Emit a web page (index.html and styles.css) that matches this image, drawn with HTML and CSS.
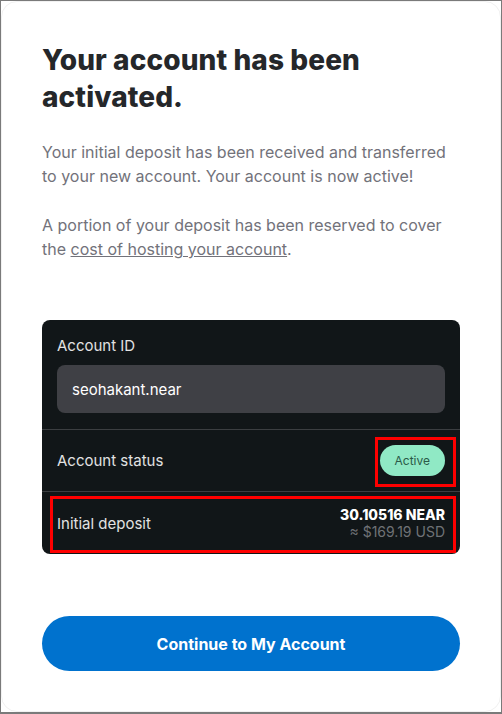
FILE: index.html
```html
<!DOCTYPE html>
<html>
  <head>
    <meta charset="utf-8">
    <title>Account activated</title>
    <link rel="stylesheet" href="styles.css">
  </head>
  <body>
    <div class="frame">
      <h1 class="title">Your account has been activated.</h1>
      <p class="text">Your initial deposit has been received and transferred to your new account. Your account is now active!</p>
      <p class="text">A portion of your deposit has been reserved to cover the <a href="#">cost of hosting your account</a>.</p>

      <div class="card">
        <div class="section">
          <div class="label">Account ID</div>
          <div class="field">seohakant.near</div>
        </div>
        <div class="row">
          <span class="label">Account status</span>
          <span class="badge">Active</span>
          <span class="mark mark-badge"></span>
        </div>
        <div class="row row-deposit">
          <span class="label">Initial deposit</span>
          <div class="amount">
            <div class="near">30.10516 NEAR</div>
            <div class="usd">≈ $169.19 USD</div>
          </div>
          <span class="mark mark-row"></span>
        </div>
      </div>

      <button class="btn">Continue to My Account</button>
    </div>
  </body>
</html>
```

FILE: styles.css
```css
*{
  margin: 0;
  padding: 0;
  box-sizing: border-box;
}
body{
  background: #fff;
  font-family: Inter, "Noto Sans", sans-serif;
  border: 1px solid #7a7a7a;
  border-bottom-width: 2px;
  height: 714px;
  overflow: hidden;
}
.frame{
  height: 100%;
  border-radius: 16px;
  border: 1px solid #f1f1f1;
  padding: 40px 40px 0 40px;
}
.title{
  font-size: 28px;
  line-height: 37px;
  font-weight: 800;
  color: #25272a;
  letter-spacing: 0.1px;
  margin-bottom: 24px;
}
.text{
  font-size: 16px;
  line-height: 24px;
  color: #72727a;
  margin-bottom: 25px;
}
.text a{
  color: #72727a;
  text-decoration: underline;
}
.card{
  margin-top: 59px;
  background: #111618;
  border-radius: 8px;
  color: #e6e6e6;
  font-size: 15px;
}
.section{
  padding: 16px 15px 16px;
  border-bottom: 1px solid #3b3e41;
}
.label{
  color: #e2e2e2;
}
.field{
  margin-top: 10px;
  height: 48px;
  background: #3f4045;
  border-radius: 8px;
  padding: 0 15px;
  display: flex;
  align-items: center;
  color: #fff;
}
.row{
  position: relative;
  display: flex;
  align-items: center;
  justify-content: space-between;
  padding: 0 15px;
  height: 62px;
  border-bottom: 1px solid #3b3e41;
}
.row-deposit{
  border-bottom: none;
}
.badge{
  background: #90e9c5;
  color: #2b5a48;
  font-size: 12px;
  border-radius: 16px;
  padding: 8px 15px;
}
.amount{
  text-align: right;
}
.near{
  font-weight: 800;
  color: #fff;
  font-size: 14px;
}
.usd{
  color: #6f7276;
  font-size: 14px;
}
.mark{
  position: absolute;
  border: 3px solid #f00;
}
.mark-badge{
  right: 4px;
  top: 7px;
  width: 81px;
  height: 50px;
}
.mark-row{
  left: 8px;
  right: 4px;
  top: 4px;
  height: 57px;
}
.btn{
  display: block;
  width: 100%;
  margin-top: 62px;
  height: 55px;
  border: none;
  border-radius: 28px;
  background: #0072ce;
  color: #fff;
  font-family: Inter, sans-serif;
  font-size: 16px;
  font-weight: 700;
}
```
